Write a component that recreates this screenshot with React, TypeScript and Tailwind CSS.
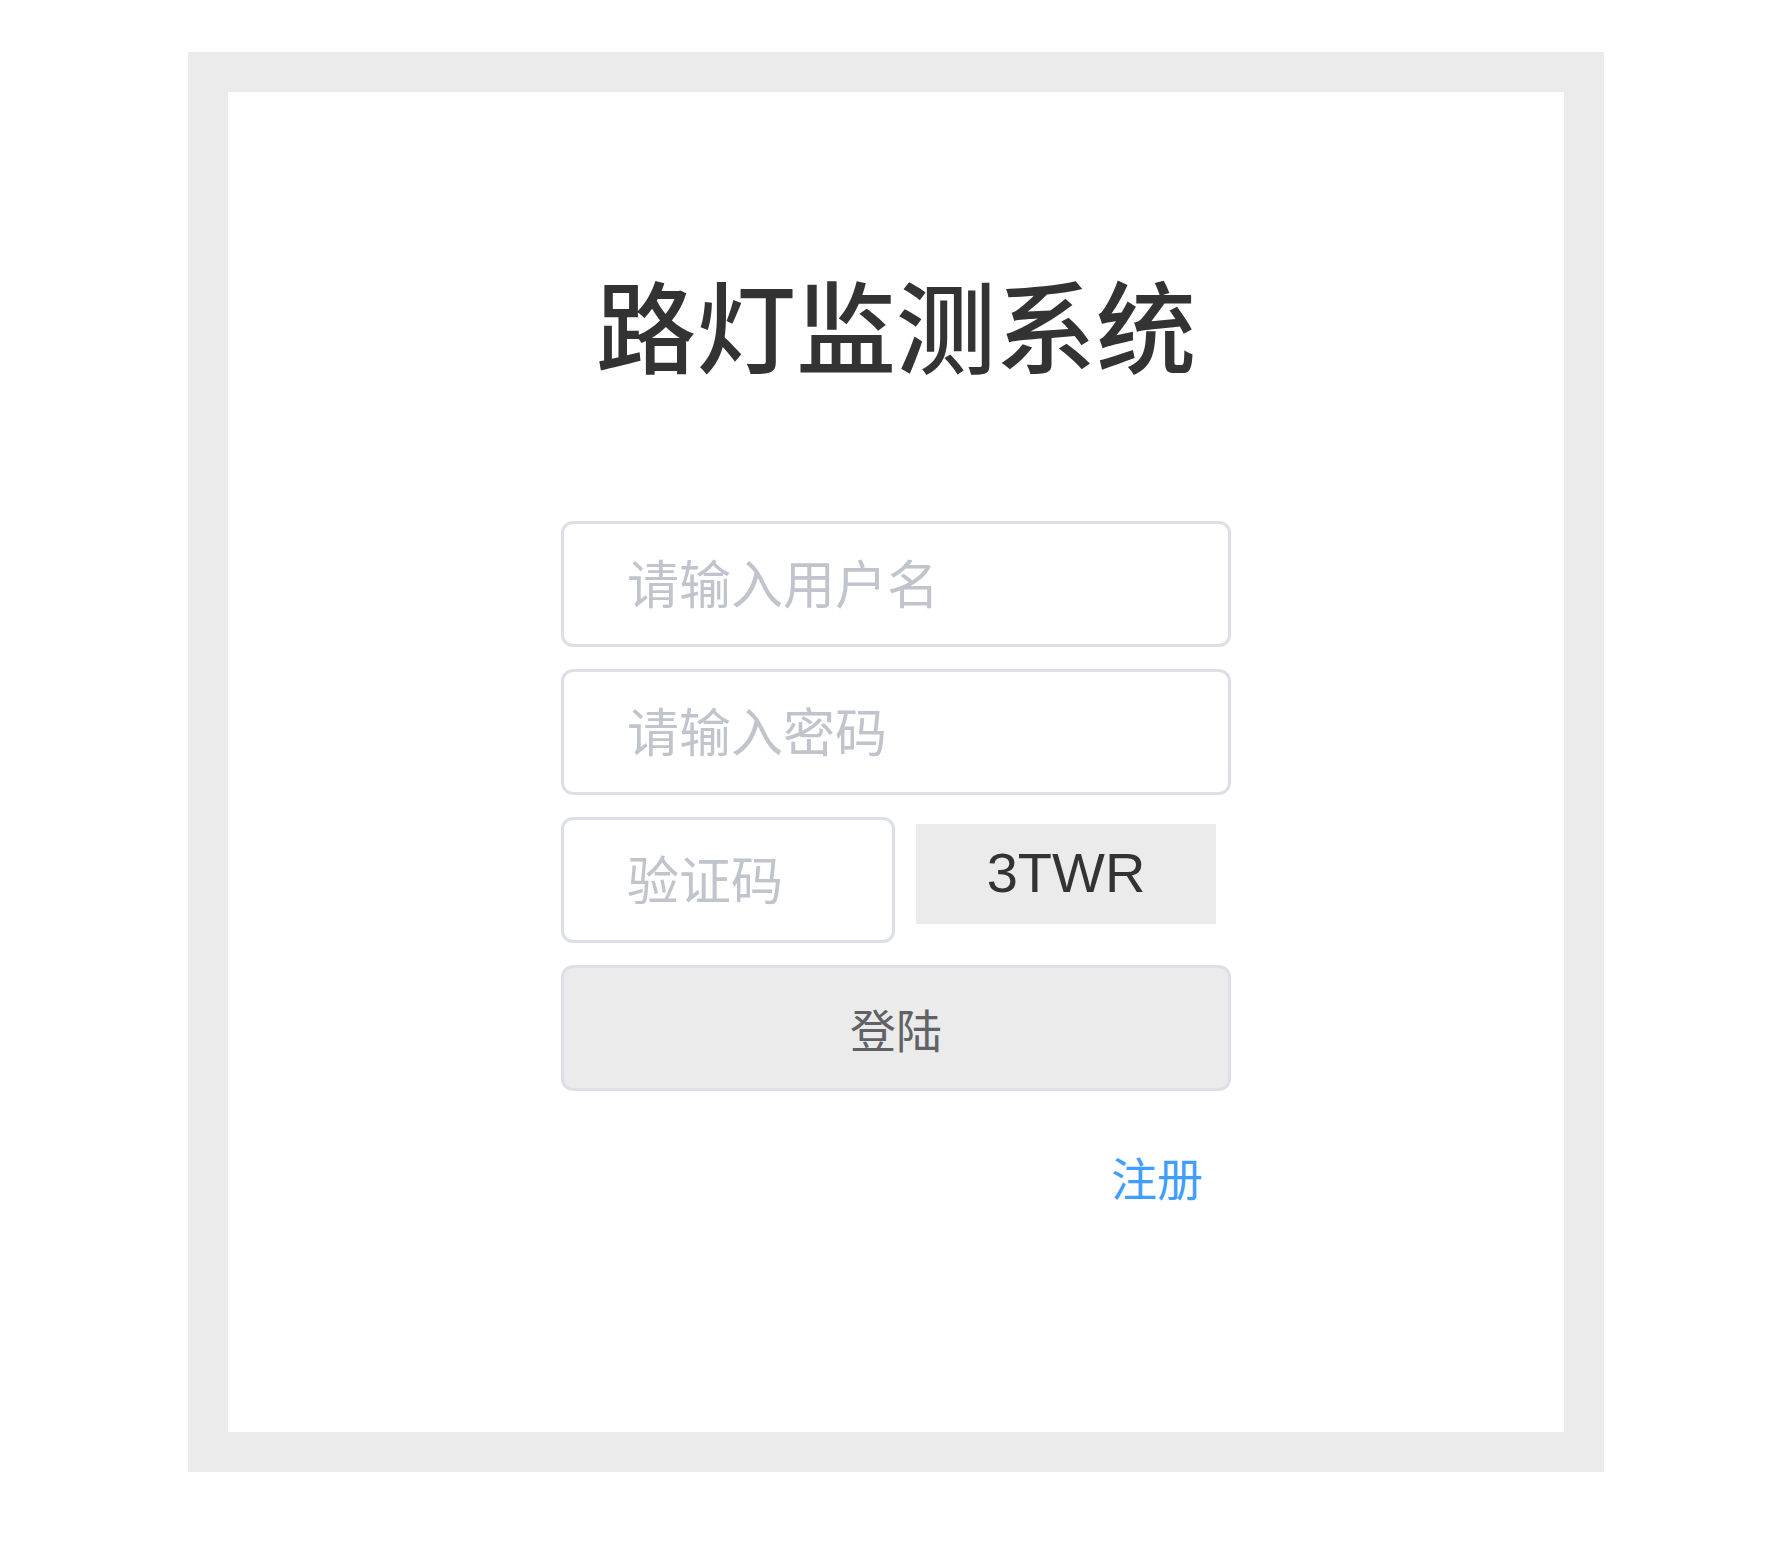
import React from "react";

const cjk = { fontFamily: '"Noto Sans CJK SC", "Noto Sans", sans-serif' };

export default function App() {
  return (
    <div className="w-full min-h-[1556px] bg-white pt-[52px]" style={cjk}>
      <div className="mx-auto w-[1416px] h-[1420px] border-[40px] border-[#ebebeb] bg-white flex flex-col items-center">
        <h1 className="mt-[181px] text-[100px] leading-none font-medium text-[#333333] [font-family:'Noto_Sans_CJK_SC',sans-serif]">
          路灯监测系统
        </h1>
        <form
          className="mt-[148px] w-[670px] flex flex-col gap-[22px]"
          onSubmit={(e) => e.preventDefault()}
        >
          <input
            type="text"
            placeholder="请输入用户名"
            className="h-[126px] w-full rounded-[12px] border-[3px] border-[#dcdfe6] bg-white pl-[63px] pb-[6px] text-[52px] text-[#606266] outline-none placeholder:text-[#c0c4cc] [font-family:'Noto_Sans_CJK_SC',sans-serif]"
          />
          <input
            type="password"
            placeholder="请输入密码"
            className="h-[126px] w-full rounded-[12px] border-[3px] border-[#dcdfe6] bg-white pl-[63px] pb-[6px] text-[52px] text-[#606266] outline-none placeholder:text-[#c0c4cc] [font-family:'Noto_Sans_CJK_SC',sans-serif]"
          />
          <div className="flex items-start">
            <input
              type="text"
              placeholder="验证码"
              className="h-[126px] w-[334px] rounded-[12px] border-[3px] border-[#dcdfe6] bg-white pl-[63px] pb-[6px] text-[52px] text-[#606266] outline-none placeholder:text-[#c0c4cc] [font-family:'Noto_Sans_CJK_SC',sans-serif]"
            />
            <div className="ml-[21px] mt-[7px] flex h-[100px] w-[300px] items-center justify-center pb-[3px] bg-[#ebebeb] text-[56px] text-[#333333] [font-family:'Liberation_Sans',Arial,sans-serif]">
              3TWR
            </div>
          </div>
          <button
            type="submit"
            className="h-[126px] w-full rounded-[12px] border-[3px] border-[#dcdfe6] bg-[#ebebeb] text-[46px] text-[#606266] [font-family:'Noto_Sans_CJK_SC',sans-serif]"
          >
            登陆
          </button>
        </form>
        <div className="mt-[62px] flex w-[670px] justify-end pr-[28px]">
          <a
            href="#"
            className="text-[46px] leading-none text-[#409eff] no-underline [font-family:'Noto_Sans_CJK_SC',sans-serif]"
          >
            注册
          </a>
        </div>
      </div>
    </div>
  );
}
